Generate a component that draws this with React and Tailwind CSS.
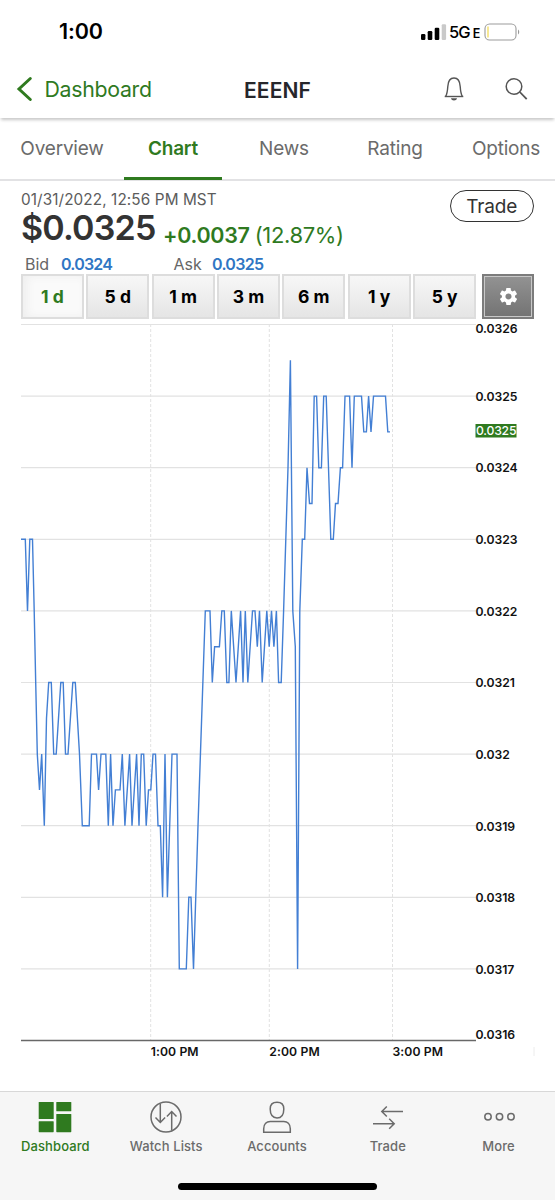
import React, { useState } from 'react';
import { IoMdSettings } from 'react-icons/io';

const TABS = ['Overview', 'Chart', 'News', 'Rating', 'Options'];
const RANGES = ['1 d', '5 d', '1 m', '3 m', '6 m', '1 y', '5 y'];

// [x, ticks above 0.0316], one tick = 0.0001
const POINTS = [
  [0, 7], [4.3, 7], [6.5, 6], [8.8, 7], [11.5, 7], [13.2, 6], [14.7, 5], [16.3, 4], [18.5, 3.5], [20.7, 4],
  [23.3, 3], [25.5, 4.5], [27.7, 5], [30.3, 5], [32.7, 4], [35.2, 4], [39.8, 5], [42.2, 5], [44.5, 4], [47, 4],
  [51.8, 5], [54.3, 5], [58.5, 4], [61.3, 3], [68.2, 3], [70.5, 4], [75.5, 4], [77.6, 3.5], [80, 4], [84.8, 4],
  [87.3, 3], [89.6, 4], [92, 3], [94.4, 3.5], [99, 3.5], [101.3, 4], [103.9, 3], [108.6, 4], [111, 3], [115.6, 4],
  [118, 3], [120.3, 4], [122.7, 4], [125.2, 3], [127.5, 3.5], [129.8, 3.5], [132, 4], [134.5, 4], [137, 3], [139.3, 3],
  [141.6, 2], [144, 4], [146.4, 2], [151, 4], [156, 4], [158.3, 1], [165.3, 1], [167.8, 2], [170, 2], [172.5, 1],
  [177, 3], [184.3, 6], [189, 6], [191.3, 5], [193.6, 5.5], [198.4, 5.5], [200.8, 6], [203.3, 6], [205.8, 5], [207.9, 5],
  [210.3, 6], [215, 5], [219.6, 6], [222, 5], [224.3, 6], [226.8, 5], [231.5, 6], [234, 6], [236.3, 5.5], [238.5, 6],
  [241.2, 5], [245.8, 6], [248.2, 5.5], [250.5, 6], [252.9, 5.5], [255.4, 6], [257.6, 5], [260.2, 5], [262.6, 6], [267, 8],
  [269.4, 9.5], [271.8, 6], [274.3, 5.5], [276.6, 1], [278.8, 6], [281.3, 7], [283.7, 7], [286, 8], [288.5, 7.5], [291, 7.5],
  [293.2, 9], [295.6, 9], [297.8, 8], [300.4, 8], [302.7, 9], [305.2, 9], [309.8, 7], [312.3, 7], [314.5, 7.5], [317, 7.5],
  [319.4, 8], [321.6, 8], [324, 9], [328.6, 9], [331, 8], [333.3, 9], [340.5, 9], [342.8, 8.5], [345.4, 8.5], [347.6, 9],
  [350, 8.5], [352.5, 9], [364.5, 9], [366.8, 8.5], [369, 8.5]
];

const PRICE_LABELS = [
  { text: '0.0326', y: 13 },
  { text: '0.0325', y: 81 },
  { text: '0.0324', y: 152.3 },
  { text: '0.0323', y: 224 },
  { text: '0.0322', y: 295.6 },
  { text: '0.0321', y: 367.3 },
  { text: '0.032', y: 439 },
  { text: '0.0319', y: 510.6 },
  { text: '0.0318', y: 582.3 },
  { text: '0.0317', y: 654 },
  { text: '0.0316', y: 719.3 }
];

const TIME_LABELS = [
  { text: '1:00 PM', x: 129.7 },
  { text: '2:00 PM', x: 248.3 },
  { text: '3:00 PM', x: 371.5 }
];

const yOf = (ticks) => 720.5 - ticks * 71.6;

function StatusBar() {
  return (
    <div className="flex h-[60px] shrink-0 items-center justify-between pl-[59px] pr-[35px] pt-1">
      <span className="text-[21.5px] font-semibold leading-none tracking-[-0.1px] text-black">1:00</span>
      <div className="flex items-center">
        <svg width="26" height="18" viewBox="0 0 26 18">
          <rect x="0" y="11" width="4.4" height="6" rx="1.2" fill="#000" />
          <rect x="6.7" y="8" width="4.6" height="9" rx="1.2" fill="#000" />
          <rect x="13.7" y="4.8" width="4.6" height="12.2" rx="1.2" fill="#000" />
          <rect x="20.7" y="1.2" width="4.4" height="15.8" rx="1.2" fill="#c9c9c9" />
        </svg>
        <span className="ml-[2.5px] w-[32px] whitespace-nowrap text-[16.5px] font-medium leading-none tracking-[-0.9px] text-black">
          5G<span className="ml-[3px] text-[12.5px] font-semibold">E</span>
        </span>
        <svg className="ml-[3px]" width="36" height="18" viewBox="0 0 36 18">
          <rect x="1" y="1" width="31" height="16" rx="4.6" fill="#fff" stroke="#9b9b9b" strokeWidth="1.1" />
          <path d="M4 3.6v10.8" stroke="#f2d94e" strokeWidth="1.2" />
          <path d="M34 6.5c1.6.8 1.6 4.2 0 5z" fill="#999" />
        </svg>
      </div>
    </div>
  );
}

function Header() {
  return (
    <div className="z-10 grid h-[58px] shrink-0 grid-cols-3 items-center bg-white shadow-[0_3px_3px_-1px_rgba(0,0,0,0.22)]">
      <div className="flex items-center pl-[16px] text-[#2f7a1f]">
        <svg width="18" height="26" viewBox="0 0 18 26" fill="none" stroke="currentColor" strokeWidth="3">
          <path d="M14.3 2.5 3 13l11.3 10.5" strokeLinecap="round" />
        </svg>
        <span className="ml-[10.5px] pt-[2px] text-[21.3px] leading-none tracking-[-0.3px]">Dashboard</span>
      </div>
      <div className="pt-[2px] text-center text-[21px] font-semibold leading-none tracking-[0.1px] text-[#26262b]">EEENF</div>
      <div className="flex items-center justify-end pr-[26px]">
        <svg width="22" height="26" viewBox="0 0 22 26" fill="none" stroke="#555" strokeWidth="1.4">
          <path d="M2.6 20.5C4.2 18 4.5 15 4.8 10.5 5.1 5 7.4 2 11 2s5.9 3 6.2 8.5c.3 4.5.6 7.5 2.2 10" />
          <path d="M1.7 20.5h18.6" />
          <path d="M8 22.3h6c-.4 3-5.6 3-6 0z" fill="#555" stroke="none" />
        </svg>
        <svg className="ml-[38px]" width="26" height="26" viewBox="0 0 26 26" fill="none" stroke="#555">
          <circle cx="11" cy="10.5" r="7.8" strokeWidth="1.5" />
          <path d="m16.8 16 6.9 7.2" strokeWidth="1.8" />
        </svg>
      </div>
    </div>
  );
}

function Quote() {
  return (
    <div className="flex h-[92.5px] shrink-0 justify-between px-[21px]">
      <div className="flex flex-col">
        <p className="mt-[10px] text-[15.3px] leading-[18px] tracking-[0.1px] text-[#5c5c5c]">01/31/2022, 12:56 PM MST</p>
        <div className="flex h-[45px] text-[#2f7a1f]">
          <span className="text-[34px] font-semibold leading-[38px] tracking-[-0.8px] text-[#333]">$0.0325</span>
          <span className="ml-[7.5px] pt-[6px] text-[21.5px] font-semibold leading-[40px] tracking-[-0.3px]">+0.0037</span>
          <span className="ml-[5px] pt-[6px] text-[22px] leading-[40px] tracking-[-0.35px]">(12.87%)</span>
        </div>
        <div className="flex pl-[4px] text-[16px] leading-[20px] text-[#666]">
          <span className="w-[36px]">Bid</span>
          <span className="w-[112.5px] font-semibold tracking-[-0.8px] text-[#2f76c4]">0.0324</span>
          <span className="w-[38.5px]">Ask</span>
          <span className="font-semibold tracking-[-0.7px] text-[#2f76c4]">0.0325</span>
        </div>
      </div>
      <button className="mt-[9px] h-[32px] w-[84.5px] rounded-full border-[1.5px] border-[#333] text-[19px] leading-none tracking-[-0.1px] text-[#333]">
        Trade
      </button>
    </div>
  );
}

function RangeBar() {
  const [range, setRange] = useState('1 d');

  return (
    <div className="flex h-[45.5px] shrink-0 pl-[21px]">
      <div className="grid w-[455px] grid-cols-7 gap-[2.5px]">
        {RANGES.map((item) => (
          <button
            key={item}
            onClick={() => setRange(item)}
            className={`border-2 border-[#dddddd] text-[17.5px] font-bold leading-none ${
              item === range
                ? 'bg-[#fafafa] text-[#2f7a1f] shadow-[inset_4px_0_8px_#eeeeee]'
                : 'bg-linear-to-b from-[#f7f7f7] to-[#e5e5e5] text-black'
            }`}
          >
            {item}
          </button>
        ))}
      </div>
      <button className="ml-[6px] w-[52px] border-2 border-[#7c7c7c] bg-[#c8c8c8] p-[1px]">
        <span className="flex h-full w-full items-center justify-center bg-linear-to-b from-[#929292] to-[#747474]">
          <IoMdSettings className="h-[21px] w-[21px] text-white" />
        </span>
      </button>
    </div>
  );
}

function PriceChart() {
  const line = POINTS.map(([x, ticks]) => `${x},${yOf(ticks)}`).join(' ');

  return (
    <svg className="ml-[21px] shrink-0" width="534" height="772" viewBox="0 -1 534 772">
      {/* Grid */}
      {TIME_LABELS.map(({ x }) => (
        <path key={x} d={`M${x} 4v716`} stroke="#e2e2e2" strokeWidth="1" strokeDasharray="3 2" />
      ))}
      {PRICE_LABELS.slice(0, 10).map((label, i) => (
        <path key={label.text} d={`M0 ${yOf(10 - i)}h455`} stroke="#e2e2e2" strokeWidth="1.2" />
      ))}
      <path d="M0 720.5h455" stroke="#686868" strokeWidth="1.3" />
      <path d="M513 727v9" stroke="#ececec" />

      <polyline points={line} fill="none" stroke="#437fd4" strokeWidth="1.4" />

      {/* Axis labels */}
      <g className="text-[12.2px] font-semibold" fill="#111">
        {PRICE_LABELS.map(({ text, y }) => (
          <text key={text} x="454.5" y={y} letterSpacing="-0.1">{text}</text>
        ))}
        {TIME_LABELS.map(({ text, x }) => (
          <text key={text} x={x} y="736" letterSpacing="0.1">{text}</text>
        ))}
      </g>

      {/* Last price */}
      <rect x="454.5" y="104" width="41" height="13.5" fill="#2f7a1f" />
      <text x="455" y="115.3" fill="#fff" className="text-[12.2px] font-medium" letterSpacing="-0.2">0.0325</text>
    </svg>
  );
}

const NAV_ITEMS = [
  {
    label: 'Dashboard',
    icon: (
      <g fill="#2f7a1f" stroke="none">
        <rect x="1.7" y="2" width="15" height="17" rx="0.6" />
        <rect x="1.7" y="21.2" width="15" height="11" rx="0.6" />
        <rect x="19.3" y="2" width="15" height="9.3" rx="0.6" />
        <rect x="19.3" y="14" width="15" height="18.2" rx="0.6" />
      </g>
    )
  },
  {
    label: 'Watch Lists',
    icon: (
      <g>
        <circle cx="18" cy="17" r="15" />
        <path d="M12.3 3.5V22M7.5 17.5l4.8 5 4.8-5" />
        <path d="M23.7 30.5V12M18.9 16.5l4.8-5 4.8 5" />
      </g>
    )
  },
  {
    label: 'Accounts',
    icon: (
      <g>
        <path d="M18 2.3c4.3 0 6.8 2.7 6.8 6.7 0 5.5-2.3 9-6.8 9s-6.8-3.5-6.8-9c0-4 2.5-6.7 6.8-6.7z" />
        <path d="M4.7 32.2v-3.4c0-5 3-7.4 6.5-7.4h13.6c3.5 0 6.5 2.4 6.5 7.4v3.4z" />
      </g>
    )
  },
  {
    label: 'Trade',
    icon: (
      <g>
        <path d="M33 11.5H11.8M16.8 6.5l-5 5 5 5" />
        <path d="M3 23.7h21.2M19.2 18.7l5 5-5 5" />
      </g>
    )
  },
  {
    label: 'More',
    icon: (
      <g>
        <circle cx="7" cy="16.7" r="3.2" />
        <circle cx="18.5" cy="16.7" r="3.2" />
        <circle cx="30" cy="16.7" r="3.2" />
      </g>
    )
  }
];

function BottomNav() {
  return (
    <div className="flex h-[109px] shrink-0 flex-col items-center border-t border-[#d8d8d8] bg-[#f6f6f6]">
      <div className="grid w-full grid-cols-5 pr-[1px]">
        {NAV_ITEMS.map(({ label, icon }) => (
          <button key={label} className="flex flex-col items-center pt-[8px]">
            <svg width="36" height="34" viewBox="0 0 36 34" fill="none" stroke="#6b6b6b" strokeWidth="1.5">
              {icon}
            </svg>
            <span
              className={`mt-[4px] text-[13px] font-medium leading-[17px] tracking-[0.1px] ${
                label === 'Dashboard' ? 'text-[#2f7a1f]' : 'text-[#6b6b6b]'
              }`}
            >
              {label}
            </span>
          </button>
        ))}
      </div>
      <div className="mt-[28px] h-[6.5px] w-[199px] rounded-full bg-black" />
    </div>
  );
}

function App() {
  const [tab, setTab] = useState('Chart');

  return (
    <div className="flex h-[1200px] w-[555px] flex-col overflow-hidden bg-white font-['Inter',sans-serif]">
      <StatusBar />
      <Header />

      {/* Tabs */}
      <div className="grid h-[63px] shrink-0 grid-cols-5">
        {TABS.map((item) => (
          <button
            key={item}
            onClick={() => setTab(item)}
            className={`flex border-b-2 border-[#e2e2e4] pl-[13px] text-[19px] leading-none tracking-[-0.2px] ${
              item === tab ? 'font-semibold text-[#2f7a1f]' : 'text-[#6b6b6b]'
            }`}
          >
            <span
              className={`-mb-[2px] flex h-[62px] flex-1 items-center justify-center border-b-[3px] pt-[2px] ${
                item === tab ? 'border-[#2f7a1f]' : 'border-transparent'
              }`}
            >
              {item}
            </span>
          </button>
        ))}
      </div>

      <Quote />
      <RangeBar />
      <PriceChart />
      <BottomNav />
    </div>
  );
}

export default App;
